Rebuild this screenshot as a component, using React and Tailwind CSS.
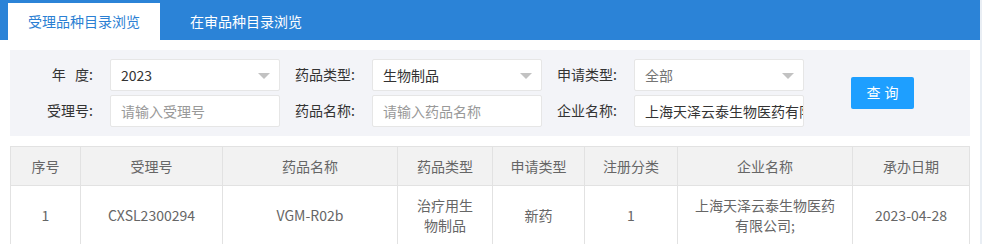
import React from 'react';

const font = { fontFamily: '"Microsoft YaHei", "Noto Sans CJK SC", "Noto Sans", sans-serif' };

function Arrow() {
  return (
    <span className="absolute right-[10px] top-[14px] w-0 h-0 border-l-[6px] border-r-[6px] border-t-[6px] border-l-transparent border-r-transparent border-t-[#c2c2c2]" />
  );
}

function Field({ label, wide, value, placeholder, select, muted }) {
  return (
    <div className="flex items-center">
      <label className={`${wide ? 'w-[100px]' : 'w-[92px]'} pr-[17px] text-right text-[14px] text-[#333]`}>{label}</label>
      <div className="relative w-[170px] h-[32px]">
        <input
          readOnly
          value={value || ''}
          placeholder={placeholder}
          className={`w-full h-full bg-white border border-[#e6e6e6] rounded-[2px] pl-[10px] ${select ? 'pr-[30px]' : 'pr-0'} text-[14px] outline-none placeholder:text-[#999] ${muted ? 'text-[#757575]' : 'text-[#333]'}`}
          style={font}
        />
        {select && <Arrow />}
      </div>
    </div>
  );
}

const cols = [
  { name: '序号', w: 'w-[70px]' },
  { name: '受理号', w: 'w-[142px]' },
  { name: '药品名称', w: 'w-[175px]' },
  { name: '药品类型', w: 'w-[95px]' },
  { name: '申请类型', w: 'w-[92px]' },
  { name: '注册分类', w: 'w-[93px]' },
  { name: '企业名称', w: 'w-[175px]' },
  { name: '承办日期', w: 'w-[117px]' },
];

const row = ['1', 'CXSL2300294', 'VGM-R02b', '治疗用生物制品', '新药', '1', '上海天泽云泰生物医药有限公司;', '2023-04-28'];

export default function App() {
  return (
    <div className="flex w-[982px] h-[244px] overflow-hidden bg-white" style={font}>
      <div className="w-[980px] flex flex-col">
        <div className="h-[40px] bg-[#2b83d7] flex items-end pl-[8px]">
          <div className="h-[37px] w-[152px] bg-white flex items-center justify-center text-[14px] text-[#2b7fd3]">受理品种目录浏览</div>
          <div className="h-[37px] ml-[10px] px-[20px] flex items-center text-[14px] text-white">在审品种目录浏览</div>
        </div>

        <div className="mt-[10px] mx-[10px] h-[87px] bg-[#f3f4f8] flex items-center">
          <div className="flex flex-col gap-[4px]">
            <div className="flex">
              <Field wide label="年&nbsp;&nbsp;&nbsp;度:" value="2023" select />
              <Field label="药品类型:" value="生物制品" select />
              <Field label="申请类型:" value="全部" select muted />
            </div>
            <div className="flex">
              <Field wide label="受理号:" placeholder="请输入受理号" />
              <Field label="药品名称:" placeholder="请输入药品名称" />
              <Field label="企业名称:" value="上海天泽云泰生物医药有限公司" />
            </div>
          </div>
          <button className="ml-[47px] w-[63px] h-[32px] bg-[#1e9fff] rounded-[2px] text-white text-[14px] tracking-[4px] pl-[4px]">查询</button>
        </div>

        <div className="mt-[10px] mx-[10px] border-l border-t border-[#e2e2e2]">
          <div className="flex bg-[#f2f2f2] border-b border-[#e2e2e2]">
            {cols.map((c) => (
              <div key={c.name} className={`${c.w} shrink-0 border-r border-[#e2e2e2] px-[15px] py-[9px] leading-[20px] text-[14px] text-[#666] text-center`}>{c.name}</div>
            ))}
          </div>
          <div className="flex">
            {cols.map((c, i) => (
              <div key={c.name} className={`${c.w} shrink-0 border-r border-[#e2e2e2] px-[15px] py-[9px] leading-[20px] text-[14px] text-[#666] text-center flex items-center justify-center`}>{row[i]}</div>
            ))}
          </div>
        </div>
      </div>
      <div className="w-[2px] bg-[#e9eef4]" />
    </div>
  );
}
